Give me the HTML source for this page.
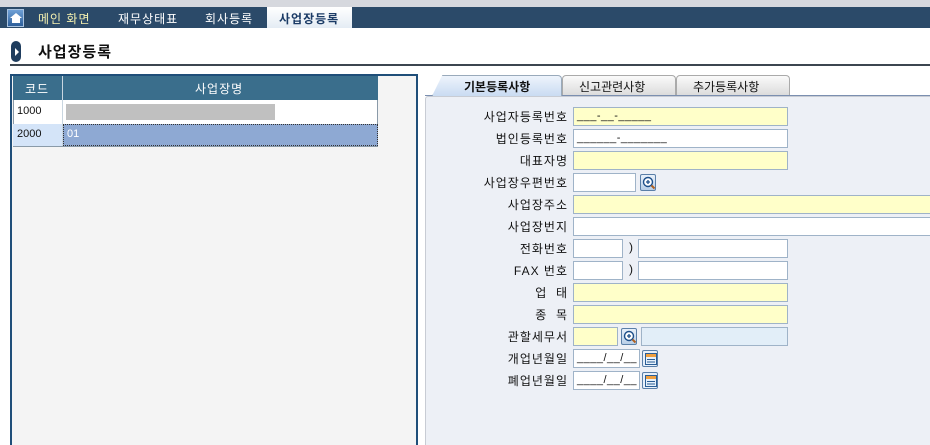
<!DOCTYPE html>
<html style="width:930px;height:445px;overflow:hidden"><head><meta charset="utf-8"><style>
*{margin:0;padding:0;box-sizing:border-box}
body{width:930px;height:445px;overflow:hidden;background:#fff;font-family:"Liberation Sans","Noto Sans CJK KR","NanumGothic",sans-serif;font-size:12px;color:#111}
#w{position:relative;width:930px;height:445px;overflow:hidden}
.a{position:absolute}
.nav{left:0;top:7px;width:930px;height:21px;background:#2b4a69}
.top{left:0;top:0;width:930px;height:7px;background:#d6d8de}
.nt{color:#fff;font-size:12px;top:10px;letter-spacing:1px}
.lbl{position:absolute;right:362px;font-size:12px;letter-spacing:1px;text-align:right;white-space:nowrap}
.in{position:absolute;height:19px;border:1px solid #9fb3c8;background:#fff;font-size:11px;line-height:17px;padding-left:3px;letter-spacing:0.5px}
.y{background:#ffffc9}
.ic{position:absolute;width:16px;height:17px;border:1px solid #5a7fa8;border-radius:2px;background:linear-gradient(#e8f0fa,#b8cfe8)}
.ic svg{position:absolute;left:1px;top:1px}
</style></head><body><div id="w">
<div class="a top"></div>
<div class="a nav"></div>
<div class="a" style="left:7px;top:9px;width:17px;height:18px;background:linear-gradient(#6fa0d6,#2d5f9a);border:1px solid #a9c3e0"><div style="margin:3px auto 0;width:0;height:0;border-left:6px solid transparent;border-right:6px solid transparent;border-bottom:5px solid #fff"></div><div style="margin:0 auto;width:8px;height:5px;background:#fff"></div></div>
<div class="a nt" style="left:38px;color:#f4f0b0">메인 화면</div>
<div class="a nt" style="left:118px">재무상태표</div>
<div class="a nt" style="left:205px">회사등록</div>
<div class="a" style="left:267px;top:7px;width:85px;height:21px;background:linear-gradient(#ffffff,#e4ecf4)"></div>
<div class="a" style="left:279px;top:10px;font-weight:bold;color:#1b3b66;letter-spacing:1px">사업장등록</div>
<div class="a" style="left:11px;top:41px;width:10px;height:21px;border-radius:5px;background:#1f3d5e"><div style="margin:7px 0 0 4px;width:0;height:0;border-top:4px solid transparent;border-bottom:4px solid transparent;border-left:4px solid #fff"></div></div>
<div class="a" style="left:38px;top:41px;font-size:15px;font-weight:bold;letter-spacing:1px">사업장등록</div>
<div class="a" style="left:10px;top:64px;width:920px;height:2px;background:#3c4650"></div>
<div class="a" style="left:10px;top:74px;width:408px;height:385px;border:2px solid #1f4e79;background:#f4f4f4"></div>
<div class="a" style="left:13px;top:76px;width:365px;height:71px;border:1px solid #8a9aa8;background:#fff"></div>
<div class="a" style="left:13px;top:76px;width:365px;height:24px;background:#3a6e8c"></div>
<div class="a" style="left:62px;top:76px;width:1px;height:70px;background:#c9d6e0"></div>
<div class="a" style="left:25px;top:80px;color:#fff;letter-spacing:1px">코드</div>
<div class="a" style="left:195px;top:80px;color:#fff;letter-spacing:1px">사업장명</div>
<div class="a" style="left:17px;top:105px;font-size:11px">1000</div>
<div class="a" style="left:66px;top:104px;width:209px;height:16px;background:#c0c0c0"></div>
<div class="a" style="left:13px;top:124px;width:49px;height:22px;background:#d4e4f8"></div>
<div class="a" style="left:17px;top:128px;font-size:11px">2000</div>
<div class="a" style="left:63px;top:124px;width:315px;height:22px;background:#8ea9d3;border:1px dotted #333"></div>
<div class="a" style="left:67px;top:128px;font-size:11px;color:#fff">01</div>
<div class="a" style="left:425px;top:96px;width:510px;height:360px;border:1px solid #c8ccd4;border-radius:3px;background:#edf0f6"></div>
<div class="a" style="left:425px;top:95px;width:505px;height:1px;background:#7b8fb0"></div>
<div class="a" style="left:432px;top:75px;width:130px;height:21px;background:linear-gradient(#eef4fc,#c9dbf2);border:1px solid #9ab;border-bottom:none;border-radius:4px 4px 0 0;clip-path:polygon(8% 0,100% 0,100% 100%,0 100%)"></div>
<div class="a" style="left:464px;top:78px;font-weight:bold">기본등록사항</div>
<div class="a" style="left:562px;top:75px;width:114px;height:20px;background:linear-gradient(#fafafa,#dcdcdc);border:1px solid #aaa;border-bottom:none;border-radius:4px 4px 0 0"></div>
<div class="a" style="left:579px;top:78px">신고관련사항</div>
<div class="a" style="left:676px;top:75px;width:114px;height:20px;background:linear-gradient(#fafafa,#dcdcdc);border:1px solid #aaa;border-bottom:none;border-radius:4px 4px 0 0"></div>
<div class="a" style="left:693px;top:78px">추가등록사항</div>

<div class="lbl" style="top:108px">사업자등록번호</div><div class="in y" style="left:573px;top:107px;width:215px">___-__-_____</div>
<div class="lbl" style="top:130px">법인등록번호</div><div class="in" style="left:573px;top:129px;width:215px">______-_______</div>
<div class="lbl" style="top:152px">대표자명</div><div class="in y" style="left:573px;top:151px;width:215px"></div>
<div class="lbl" style="top:174px">사업장우편번호</div><div class="in" style="left:573px;top:173px;width:63px"></div><div class="ic" style="left:640px;top:174px"><svg width="14" height="14" viewBox="0 0 14 14"><circle cx="6" cy="6" r="4.5" fill="#fff" stroke="#1d4f8a" stroke-width="1.4"/><path d="M4 6h4M6 4v4" stroke="#1d4f8a" stroke-width="1.3"/><path d="M9.5 9.5l3 3" stroke="#b06020" stroke-width="2"/></svg></div>
<div class="lbl" style="top:196px">사업장주소</div><div class="in y" style="left:573px;top:195px;width:360px"></div>
<div class="lbl" style="top:218px">사업장번지</div><div class="in" style="left:573px;top:217px;width:360px"></div>
<div class="lbl" style="top:240px">전화번호</div><div class="in" style="left:573px;top:239px;width:50px"></div><div class="a" style="left:629px;top:240px">)</div><div class="in" style="left:638px;top:239px;width:150px"></div>
<div class="lbl" style="top:262px">FAX 번호</div><div class="in" style="left:573px;top:261px;width:50px"></div><div class="a" style="left:629px;top:262px">)</div><div class="in" style="left:638px;top:261px;width:150px"></div>
<div class="lbl" style="top:284px">업 &nbsp;태</div><div class="in y" style="left:573px;top:283px;width:215px"></div>
<div class="lbl" style="top:306px">종 &nbsp;목</div><div class="in y" style="left:573px;top:305px;width:215px"></div>
<div class="lbl" style="top:328px">관할세무서</div><div class="in y" style="left:573px;top:327px;width:45px"></div><div class="ic" style="left:621px;top:328px"><svg width="14" height="14" viewBox="0 0 14 14"><circle cx="6" cy="6" r="4.5" fill="#fff" stroke="#1d4f8a" stroke-width="1.4"/><path d="M4 6h4M6 4v4" stroke="#1d4f8a" stroke-width="1.3"/><path d="M9.5 9.5l3 3" stroke="#b06020" stroke-width="2"/></svg></div><div class="in" style="left:641px;top:327px;width:147px;background:#e2eef8"></div>
<div class="lbl" style="top:350px">개업년월일</div><div class="in" style="left:573px;top:349px;width:67px">____/__/__</div><div class="ic" style="left:642px;top:350px;background:#e8f0fa"><svg width="14" height="14" viewBox="0 0 14 14"><rect x="1.5" y="1.5" width="11" height="11" fill="#e6f0fa" stroke="#2a5e96"/><rect x="2" y="2" width="10" height="3" fill="#f0a040"/><path d="M3 7.5h8M3 10h8" stroke="#2a5e96"/></svg></div>
<div class="lbl" style="top:372px">폐업년월일</div><div class="in" style="left:573px;top:371px;width:67px">____/__/__</div><div class="ic" style="left:642px;top:372px;background:#e8f0fa"><svg width="14" height="14" viewBox="0 0 14 14"><rect x="1.5" y="1.5" width="11" height="11" fill="#e6f0fa" stroke="#2a5e96"/><rect x="2" y="2" width="10" height="3" fill="#f0a040"/><path d="M3 7.5h8M3 10h8" stroke="#2a5e96"/></svg></div>
</div></body></html>
